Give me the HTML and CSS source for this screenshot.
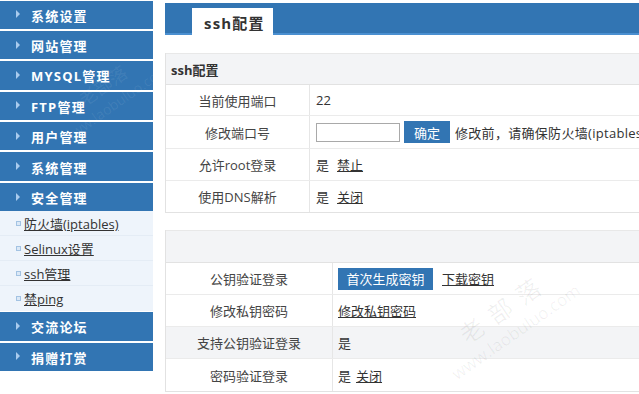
FILE: index.html
```html
<!DOCTYPE html>
<html>
<head>
<meta charset="utf-8">
<link rel="stylesheet" href="styles.css">
</head>
<body>
<div class="page">
  <nav class="sidebar">
    <div class="menu"><span class="arrow"></span><span class="mtext">系统设置</span></div>
    <div class="menu"><span class="arrow"></span><span class="mtext">网站管理</span></div>
    <div class="menu"><span class="arrow"></span><span class="mtext">MYSQL管理</span></div>
    <div class="menu"><span class="arrow"></span><span class="mtext">FTP管理</span></div>
    <div class="menu"><span class="arrow"></span><span class="mtext">用户管理</span></div>
    <div class="menu"><span class="arrow"></span><span class="mtext">系统管理</span></div>
    <div class="menu open"><span class="arrow"></span><span class="mtext">安全管理</span></div>
    <ul class="submenu">
      <li><span class="bullet"></span><a href="#">防火墙(iptables)</a></li>
      <li><span class="bullet"></span><a href="#">Selinux设置</a></li>
      <li><span class="bullet"></span><a href="#">ssh管理</a></li>
      <li><span class="bullet"></span><a href="#">禁ping</a></li>
    </ul>
    <div class="menu"><span class="arrow"></span><span class="mtext">交流论坛</span></div>
    <div class="menu"><span class="arrow"></span><span class="mtext">捐赠打赏</span></div>
  </nav>
  <main class="main">
    <div class="tabbar"><div class="tab">ssh配置</div></div>

    <section class="panel first">
      <div class="panel-head">ssh配置</div>
      <div class="row r1"><div class="label">当前使用端口</div><div class="value">22</div></div>
      <div class="row r2"><div class="label">修改端口号</div><div class="value"><input class="port" type="text"><button class="btn small">确定</button><span class="hint">修改前，请确保防火墙(iptables)已放行新端口</span></div></div>
      <div class="row r3"><div class="label">允许root登录</div><div class="value">是<a href="#" class="link gap">禁止</a></div></div>
      <div class="row r4"><div class="label">使用DNS解析</div><div class="value">是<a href="#" class="link gap">关闭</a></div></div>
    </section>

    <section class="panel second">
      <div class="panel-head empty"></div>
      <div class="row s1"><div class="label">公钥验证登录</div><div class="value"><button class="btn">首次生成密钥</button><a href="#" class="link dl">下载密钥</a></div></div>
      <div class="row s2"><div class="label">修改私钥密码</div><div class="value"><a href="#" class="link">修改私钥密码</a></div></div>
      <div class="row s3 gray"><div class="label">支持公钥验证登录</div><div class="value">是</div></div>
      <div class="row s4"><div class="label">密码验证登录</div><div class="value">是<a href="#" class="link gap2">关闭</a></div></div>
    </section>
  </main>
  <div class="watermark wm-main"><span class="wm-big">老 部 落</span><span class="wm-small">www.laobuluo.com</span></div>
  <div class="watermark wm-side"><span class="wm-big">老部落</span><span class="wm-small">www.laobuluo.com</span></div>
</div>
</body>
</html>
```
FILE: styles.css
```css
* { box-sizing: border-box; }
html, body { margin: 0; padding: 0; background: #fff; }
body {
  width: 639px;
  height: 394px;
  overflow: hidden;
  font-family: "Open Sans", "Noto Sans CJK SC", sans-serif;
  font-size: 13px;
  color: #333;
}
.page {
  position: relative;
  display: flex;
  align-items: flex-start;
  width: 639px;
  height: 394px;
  overflow: hidden;
}
.sidebar {
  width: 153px;
  flex: none;
  padding-top: 0.5px;
}
.menu {
  height: 28.4px;
  margin-bottom: 2px;
  background: #3275b3;
  color: #fff;
  font-weight: bold;
  font-size: 13px;
  letter-spacing: 1.2px;
  display: flex;
  align-items: center;
  padding-left: 16px;
  line-height: 1;
}
.mtext { padding-top: 3px; }
.menu.open { margin-bottom: 0; }
.arrow {
  width: 0;
  height: 0;
  border-top: 4px solid transparent;
  border-bottom: 4px solid transparent;
  border-left: 4px solid #a9cbee;
  margin-right: 11px;
  margin-top: -1px;
}
.submenu {
  list-style: none;
  margin: 0 0 1px 0;
  padding: 0;
  background: #eef4fb;
}
.submenu li {
  height: 25px;
  display: flex;
  align-items: center;
  padding-left: 16px;
  border-bottom: 1px solid #e4ecf5;
}
.submenu li:last-child { border-bottom: none; }
.bullet {
  width: 5px;
  height: 5px;
  border: 1px solid #a3c3e3;
  background: #dbe8f6;
  margin-right: 3px;
}
.submenu a {
  color: #333;
  text-decoration: underline;
  font-size: 13px;
}
.main {
  margin-left: 12px;
  width: 540px;
  flex: none;
}
.tabbar {
  margin-top: 3px;
  height: 32px;
  background: #3275b3;
  border-bottom: 2px solid #4a8fd0;
  display: flex;
  align-items: flex-end;
  padding-left: 27px;
}
.tab {
  width: 81px;
  height: 27px;
  margin-bottom: -2px;
  background: #fff;
  font-weight: bold;
  font-size: 15px;
  letter-spacing: 1.2px;
  color: #333;
  display: flex;
  align-items: center;
  padding-left: 12px;
  padding-top: 1px;
}
.panel {
  border-left: 1px solid #e2e2e2;
  border-bottom: 1px solid #e2e2e2;
}
.panel.first { margin-top: 18px; }
.panel.second { margin-top: 17px; }
.panel-head {
  height: 32px;
  background: #f3f4f6;
  border-top: 1px solid #e8e8e8;
  border-bottom: 1px solid #e2e2e2;
  font-weight: bold;
  font-size: 13px;
  display: flex;
  align-items: center;
  padding-left: 5px;
  color: #333;
}
.panel-head.empty { height: 33px; }
.row {
  display: flex;
  border-bottom: 1px solid #ebebeb;
}
.row:last-child { border-bottom: none; }
.row.gray { background: #f3f4f6; }
.r1 { height: 31px; }
.r2 { height: 33px; }
.r3 { height: 32px; }
.r4 { height: 31px; }
.s1, .s2, .s3, .s4 { height: 32px; }
.label {
  flex: none;
  width: 144px;
  border-right: 1px solid #e6e6e6;
  display: flex;
  align-items: center;
  justify-content: center;
  color: #444;
}
.second .label { width: 167px; }
.value {
  flex: 1;
  display: flex;
  align-items: center;
  padding-left: 6px;
  white-space: nowrap;
  color: #333;
}
.second .value { padding-left: 5px; }
.port {
  width: 84px;
  height: 19px;
  border: 1px solid #a9a9a9;
  padding: 0;
  margin: 0 4px 0 0;
  font: inherit;
}
.btn {
  border: none;
  background: #3275b3;
  color: #fff;
  font-family: "Open Sans", "Noto Sans CJK SC", sans-serif;
  font-size: 13px;
  height: 22px;
  padding: 0 8px;
  margin: 0;
  display: flex;
  align-items: center;
  justify-content: center;
}
.btn.small { width: 46px; padding: 0; margin-right: 5px; }
.second .btn { width: 95px; padding: 0; }
.hint { color: #333; letter-spacing: 0.3px; }
.link { color: #333; text-decoration: underline; }
.link.gap { margin-left: 8px; }
.link.gap2 { margin-left: 5px; }
.link.dl { margin-left: 9px; }
.watermark {
  position: absolute;
  display: flex;
  flex-direction: column;
  align-items: center;
  transform: rotate(-35deg);
  pointer-events: none;
  font-family: "Open Sans", "Noto Sans CJK SC", sans-serif;
}
.wm-main { left: 430px; top: 290px; color: rgba(0,0,0,0.06); }
.wm-main .wm-big { font-size: 24px; letter-spacing: 2px; }
.wm-main .wm-small { font-size: 17px; margin-top: -2px; }
.wm-side { left: 45px; top: 70px; color: rgba(255,255,255,0.08); }
.wm-side .wm-big { font-size: 18px; }
.wm-side .wm-small { font-size: 14px; }
```
